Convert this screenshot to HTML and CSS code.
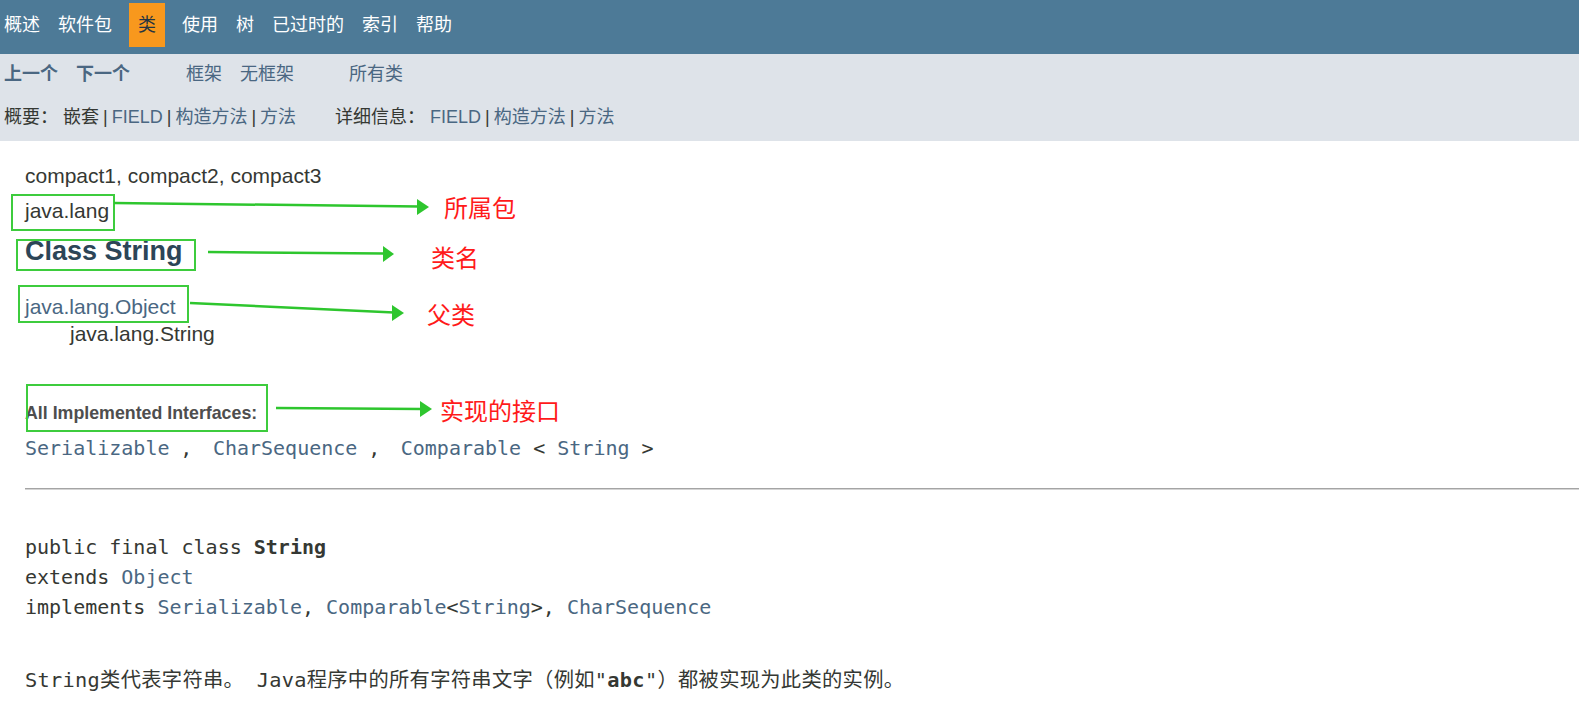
FILE: index.html
```html
<!DOCTYPE html>
<html lang="zh-CN">
<head>
<meta charset="utf-8">
<title>String</title>
<link rel="stylesheet" href="styles.css">
</head>
<body>
<div class="topNav">
  <ul class="navList">
    <li>概述</li>
    <li>软件包</li>
    <li class="active">类</li>
    <li>使用</li>
    <li>树</li>
    <li>已过时的</li>
    <li>索引</li>
    <li>帮助</li>
  </ul>
</div>
<div class="subNav">
  <div class="subRow1">
    <div class="group"><span class="strong">上一个</span><span class="strong">下一个</span></div>
    <div class="group g2"><a>框架</a><a>无框架</a></div>
    <div class="group g3"><a>所有类</a></div>
  </div>
  <div class="subRow2">
    <div class="summary">概要：<span class="sp"></span>嵌套 | <a>FIELD</a> | <a>构造方法</a> | <a>方法</a></div>
    <div class="detail">详细信息：<span class="sp"></span><a>FIELD</a> | <a>构造方法</a> | <a>方法</a></div>
  </div>
</div>
<main class="content">
  <div class="compact">compact1, compact2, compact3</div>
  <div class="pkg">java.lang</div>
  <h2 class="title">Class String</h2>
  <div class="inherit1"><a>java.lang.Object</a></div>
  <div class="inherit2">java.lang.String</div>
  <div class="ifaceLabel">All Implemented Interfaces:</div>
  <div class="ifaceList"><a>Serializable</a><span class="sep"> ,  </span><a>CharSequence</a><span class="sep"> ,  </span><a>Comparable</a> &lt; <a>String</a> &gt;</div>
  <hr class="rule">
  <pre class="decl">public final class <b>String</b>
extends <a>Object</a>
implements <a>Serializable</a>, <a>Comparable</a>&lt;<a>String</a>&gt;, <a>CharSequence</a></pre>
  <div class="desc">String类代表字符串。 Java程序中的所有字符串文字（例如"<b>abc</b>"）都被实现为此类的实例。</div>
</main>

<div class="annot">
  <svg class="annotSvg" width="1579" height="728" viewBox="0 0 1579 728">
    <g fill="none" stroke="#3dcc3d" stroke-width="2">
      <rect x="12" y="195" width="102" height="35"/>
      <rect x="17" y="240" width="178" height="30"/>
      <rect x="19" y="286" width="169" height="36"/>
      <rect x="27" y="385" width="240" height="46"/>
    </g>
    <g stroke="#2ec62e" stroke-width="2.5">
      <line x1="114" y1="203" x2="419" y2="206.5"/>
      <line x1="208" y1="252" x2="385" y2="253.5"/>
      <line x1="190" y1="303" x2="394" y2="312.5"/>
      <line x1="276" y1="408" x2="422" y2="409"/>
    </g>
    <g fill="#2ec62e">
      <polygon points="429,207 417,199 417,215"/>
      <polygon points="394,254 383,246 383,262"/>
      <polygon points="404,313 392,305 392,321"/>
      <polygon points="432,409 420,401 420,417"/>
    </g>
  </svg>
  <div class="label l1">所属包</div>
  <div class="label l2">类名</div>
  <div class="label l3">父类</div>
  <div class="label l4">实现的接口</div>
</div>
</body>
</html>
```
FILE: styles.css
```css
* { box-sizing: border-box; }
html, body { margin: 0; padding: 0; }
body {
  position: relative;
  width: 1579px;
  height: 728px;
  overflow: hidden;
  background: #ffffff;
  color: #353833;
  font-family: "Liberation Sans", Arial, "Noto Sans CJK SC", sans-serif;
}
a { color: #4a6782; text-decoration: none; }

/* top navigation */
.topNav {
  background: #4d7a97;
  height: 54px;
}
.navList {
  list-style: none;
  margin: 0 0 0 -5px;
  padding: 3px 0 0 0;
  display: flex;
}
.navList li {
  padding: 0 9px;
  height: 44px;
  line-height: 44px;
  font-size: 18px;
  color: #ffffff;
}
.navList li.active {
  background: #f8981d;
  color: #253441;
  margin: 0 8px;
}

/* sub navigation */
.subNav {
  background: #dee3e9;
  height: 87px;
  padding: 8px 0 0 4px;
  font-size: 18px;
}
.subRow1 {
  display: flex;
  height: 24px;
  line-height: 24px;
}
.group { display: flex; gap: 18px; }
.g2 { margin-left: 56px; }
.g3 { margin-left: 55px; }
.strong { font-weight: bold; color: #4a6782; }
.subRow2 {
  display: flex;
  margin-top: 19px;
  height: 24px;
  line-height: 24px;
  white-space: pre;
  word-spacing: -1px;
}
.sp { display: inline-block; width: 5px; }
.detail { margin-left: 39px; }
.detail a + a, .detail a { }

/* content */
.content { padding: 23px 0 0 25px; }
.compact, .pkg, .inherit1, .inherit2 {
  font-size: 21px;
  line-height: 24px;
}
.pkg { margin-top: 11px; }
.title {
  margin: 12px 0 0;
  font-size: 27px;
  line-height: 32px;
  font-weight: bold;
  color: #2c4557;
}
.inherit1 { margin-top: 28px; }
.inherit2 { margin-top: 3px; padding-left: 45px; }
.ifaceLabel {
  margin-top: 56px;
  font-size: 17.8px;
  line-height: 22px;
  font-weight: bold;
  color: #4e4e4e;
}
.ifaceList {
  margin-top: 12px;
  font-family: "DejaVu Sans Mono", "Noto Sans CJK SC", monospace;
  font-size: 20px;
  line-height: 24px;
  white-space: pre;
}
.sep { letter-spacing: -1.2px; }
.rule {
  margin: 28px 0 0;
  height: 0;
  border: 0;
  border-top: 1px solid #a4a4a4;
  border-bottom: 1px solid #d4d4d4;
}
.decl {
  margin: 42px 0 0;
  font-family: "DejaVu Sans Mono", "Noto Sans CJK SC", monospace;
  font-size: 20px;
  line-height: 30px;
  color: #353833;
}
.desc {
  margin-top: 43px;
  font-family: "DejaVu Sans Mono", "Noto Sans CJK SC", monospace;
  font-size: 20.3px;
  line-height: 30px;
  letter-spacing: 0.3px;
  white-space: pre;
}

/* annotation overlay */
.annot {
  position: absolute;
  left: 0;
  top: 0;
  width: 1579px;
  height: 728px;
  pointer-events: none;
}
.annotSvg { position: absolute; left: 0; top: 0; }
.label {
  position: absolute;
  color: #ff1a1a;
  font-family: "Noto Sans CJK SC", sans-serif;
  font-size: 24px;
  line-height: 24px;
}
.l1 { left: 444px; top: 195px; }
.l2 { left: 431px; top: 245px; }
.l3 { left: 427px; top: 302px; }
.l4 { left: 440px; top: 398px; }
```
